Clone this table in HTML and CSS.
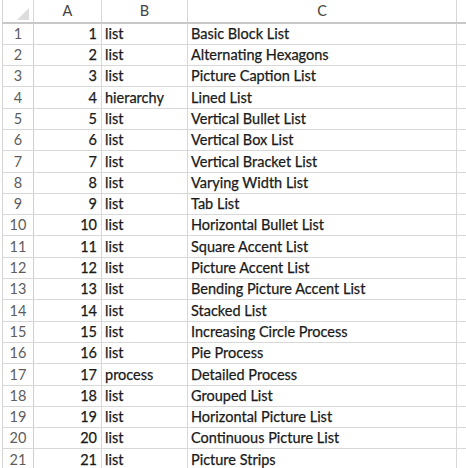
FILE: index.html
```html
<!DOCTYPE html>
<html>
<head>
<meta charset="utf-8">
<link rel="stylesheet" href="styles.css">
</head>
<body>
<table class="sheet">
<colgroup><col class="c-rh"><col class="c-a"><col class="c-b"><col class="c-c"><col class="c-d"></colgroup>
<thead>
<tr><th class="corner"><span class="tri"></span></th><th>A</th><th>B</th><th>C</th><th></th></tr>
</thead>
<tbody>
<tr><th>1</th><td class="num">1</td><td>list</td><td>Basic Block List</td><td></td></tr>
<tr><th>2</th><td class="num">2</td><td>list</td><td>Alternating Hexagons</td><td></td></tr>
<tr><th>3</th><td class="num">3</td><td>list</td><td>Picture Caption List</td><td></td></tr>
<tr><th>4</th><td class="num">4</td><td>hierarchy</td><td>Lined List</td><td></td></tr>
<tr><th>5</th><td class="num">5</td><td>list</td><td>Vertical Bullet List</td><td></td></tr>
<tr><th>6</th><td class="num">6</td><td>list</td><td>Vertical Box List</td><td></td></tr>
<tr><th>7</th><td class="num">7</td><td>list</td><td>Vertical Bracket List</td><td></td></tr>
<tr><th>8</th><td class="num">8</td><td>list</td><td>Varying Width List</td><td></td></tr>
<tr><th>9</th><td class="num">9</td><td>list</td><td>Tab List</td><td></td></tr>
<tr><th>10</th><td class="num">10</td><td>list</td><td>Horizontal Bullet List</td><td></td></tr>
<tr><th>11</th><td class="num">11</td><td>list</td><td>Square Accent List</td><td></td></tr>
<tr><th>12</th><td class="num">12</td><td>list</td><td>Picture Accent List</td><td></td></tr>
<tr><th>13</th><td class="num">13</td><td>list</td><td>Bending Picture Accent List</td><td></td></tr>
<tr><th>14</th><td class="num">14</td><td>list</td><td>Stacked List</td><td></td></tr>
<tr><th>15</th><td class="num">15</td><td>list</td><td>Increasing Circle Process</td><td></td></tr>
<tr><th>16</th><td class="num">16</td><td>list</td><td>Pie Process</td><td></td></tr>
<tr><th>17</th><td class="num">17</td><td>process</td><td>Detailed Process</td><td></td></tr>
<tr><th>18</th><td class="num">18</td><td>list</td><td>Grouped List</td><td></td></tr>
<tr><th>19</th><td class="num">19</td><td>list</td><td>Horizontal Picture List</td><td></td></tr>
<tr><th>20</th><td class="num">20</td><td>list</td><td>Continuous Picture List</td><td></td></tr>
<tr><th>21</th><td class="num">21</td><td>list</td><td>Picture Strips</td><td></td></tr>
</tbody>
</table>
</body>
</html>
```
FILE: styles.css
```css
html, body {
  margin: 0;
  padding: 0;
  background: #ffffff;
}
body {
  padding-left: 2px;
  overflow: hidden;
  width: 464px;
  height: 468px;
  font-family: Lato, "Open Sans", sans-serif;
  font-size: 14.5px;
  color: #1a1a1a;
}
.sheet {
  border-collapse: collapse;
  table-layout: fixed;
  width: 464px;
  border-left: 1px solid #d4d4d4;
}
.c-rh { width: 31px; }
.c-a { width: 68px; }
.c-b { width: 86px; }
.c-c { width: 269px; }
.c-d { width: 10px; }

.sheet th, .sheet td {
  border-right: 1px solid #d8d8d8;
  border-bottom: 1px solid #d8d8d8;
  padding: 0 3px 3px 3px;
  white-space: nowrap;
  overflow: hidden;
  vertical-align: bottom;
  text-align: left;
  font-weight: normal;
  line-height: 15px;
}
.sheet td {
  -webkit-text-stroke: 0.25px #1a1a1a;
}
.sheet thead tr { height: 23px; }
.sheet tbody tr { height: 21.3px; }
.sheet thead th {
  text-align: center;
  color: #444444;
  border-bottom: 2px solid #c8c8c8;
  vertical-align: middle;
  padding-bottom: 1px;
}
.sheet tbody th {
  text-align: center;
  color: #5d5d5d;
  border-right: 1px solid #cfcfcf;
  padding: 0 0 3px 0;
}
.sheet td.num { text-align: right; padding-right: 4px; }
.corner { position: relative; }
.tri {
  position: absolute;
  right: 4px;
  bottom: 2px;
  width: 0;
  height: 0;
  border-left: 12px solid transparent;
  border-bottom: 12px solid #dcdcdc;
}
```
